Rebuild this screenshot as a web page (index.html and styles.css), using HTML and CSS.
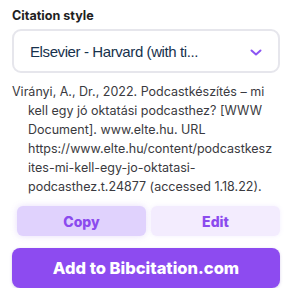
FILE: index.html
```html
<!DOCTYPE html>
<html lang="en">
<head>
    <meta charset="UTF-8">
    <meta name="viewport" content="width=device-width, initial-scale=1.0">
    <title>Citation</title>
    <link rel="stylesheet" href="styles.css">
</head>
<body>

    <div class="citation-panel">
        <label class="field-label" for="style">Citation style</label>
        <div class="select-box" id="style">
            <span class="select-text">Elsevier - Harvard (with ti...</span>
            <svg class="chevron" width="12" height="7" viewBox="0 0 12 7">
                <path d="M1.5 1.5 L6 5.5 L10.5 1.5" fill="none" stroke="#8b55f3" stroke-width="2" stroke-linecap="round" stroke-linejoin="round"/>
            </svg>
        </div>

        <p class="citation-text">Virányi, A., Dr., 2022. Podcastkészítés – mi kell egy jó oktatási podcasthez? [WWW Document]. www.elte.hu. URL https://www.elte.hu/content/podcastkesz<wbr>ites-mi-kell-egy-jo-oktatasi-podcasthez.t.24877 (accessed 1.18.22).</p>

        <div class="actions">
            <button class="btn-copy">Copy</button>
            <button class="btn-edit">Edit</button>
        </div>

        <button class="btn-add">Add to Bibcitation.com</button>
    </div>

</body>
</html>
```

FILE: styles.css
```css
body {
    font-family: Inter, "Noto Sans", sans-serif;
    background-color: #fff;
    margin: 0;
    padding: 0;
    color: #333;
}
.citation-panel {
    padding: 8px 9px 0 12px;
}
.field-label {
    display: block;
    font-size: 12.6px;
    line-height: 15px;
    font-weight: 700;
    color: #1f1f23;
    margin-bottom: 6px;
}
.select-box {
    height: 44px;
    box-sizing: border-box;
    border: 2px solid #e6e6ec;
    border-radius: 9px;
    display: flex;
    align-items: center;
    justify-content: space-between;
    padding: 0 16px 0 16px;
}
.select-text {
    font-family: "Liberation Sans", Arial, sans-serif;
    font-size: 15px;
    letter-spacing: -0.4px;
    color: #17324d;
}
.chevron {
    margin-top: 2px;
}
.citation-text {
    font-size: 12.5px;
    line-height: 19px;
    color: #3a3a40;
    margin: 9px 12px 0 0;
    padding-left: 16px;
    text-indent: -16px;
}
.actions {
    display: grid;
    grid-template-columns: 1fr 1fr;
    gap: 5px;
    margin-top: 10px;
    padding-left: 5px;
}
button {
    font-family: Inter, "Noto Sans", sans-serif;
    font-weight: 800;
    border: none;
    cursor: pointer;
}
.btn-copy, .btn-edit {
    height: 30px;
    border-radius: 6px;
    font-size: 14px;
    color: #8b4bee;
}
.btn-copy {
    background-color: #e0d2fd;
    box-shadow: 0 0 6px rgba(160, 120, 240, 0.25);
}
.btn-edit {
    background-color: #f3ecfe;
    box-shadow: 0 0 4px rgba(160, 120, 240, 0.12);
}
.btn-add {
    display: block;
    width: 100%;
    height: 40px;
    margin-top: 12px;
    border-radius: 8px;
    background-color: #8d4bf0;
    color: #fff;
    font-size: 16.5px;
    box-shadow: 0 1px 3px rgba(100, 60, 180, 0.25);
}
```
